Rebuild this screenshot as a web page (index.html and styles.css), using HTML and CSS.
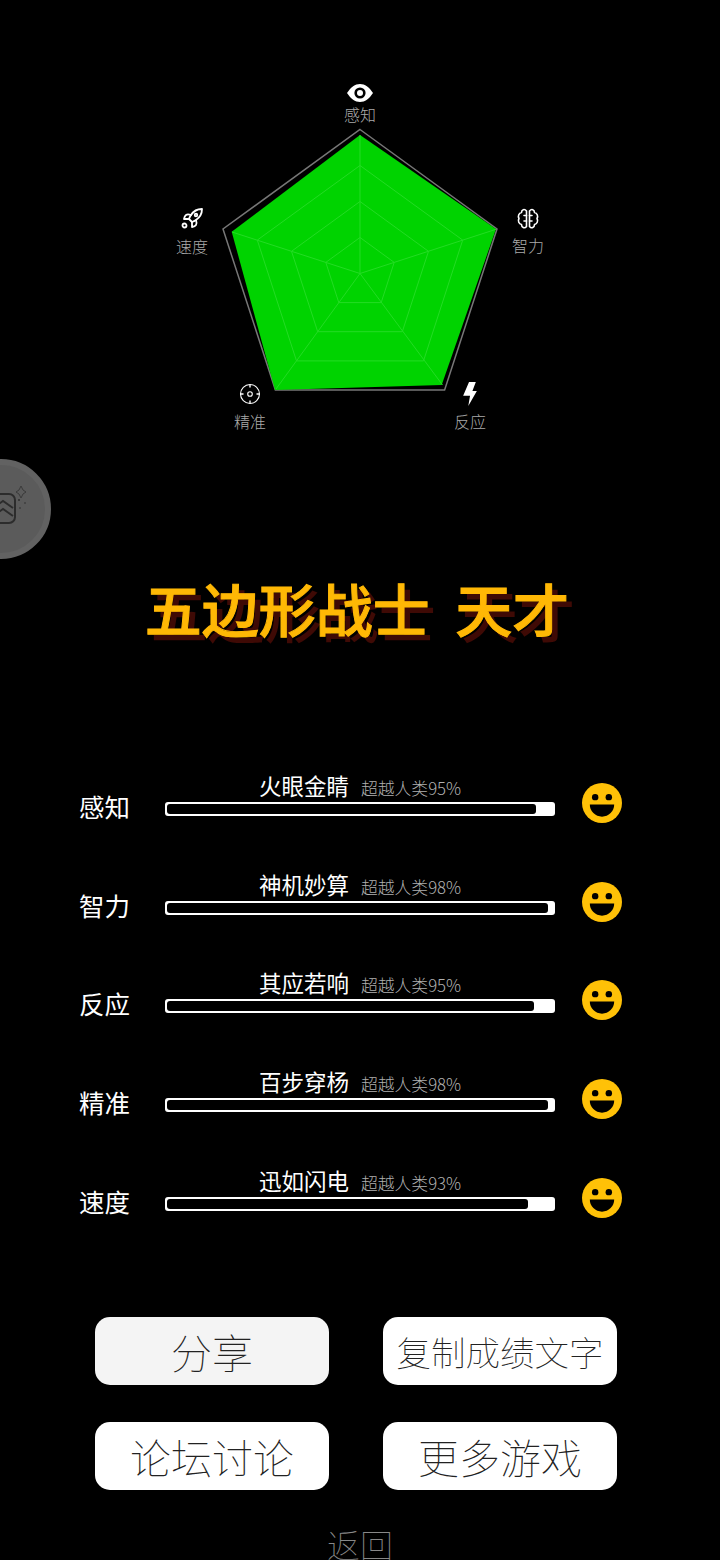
FILE: index.html
```html
<!DOCTYPE html>
<html lang="zh-CN">
<head>
  <meta charset="UTF-8" />
  <meta name="viewport" content="width=device-width, initial-scale=1.0"/>
  <title>五边形战士</title>
  <link rel="stylesheet" href="styles.css">
</head>
<body>

  <svg class="defs" width="0" height="0">
    <symbol id="smile" viewBox="0 0 41 41">
      <circle cx="20.5" cy="20.5" r="20.5" fill="#ffc107"/>
      <circle cx="13.5" cy="14.5" r="3.3" fill="#000"/>
      <circle cx="27.5" cy="14.5" r="3.3" fill="#000"/>
      <path d="M8 22H33a12.5 12.5 0 0 1-25 0z" fill="#000"/>
    </symbol>
  </svg>

  <!-- Radar -->
  <section class="radar">
    <svg class="radar-chart" width="720" height="450" viewBox="0 0 720 450">
      <polygon class="rim" points="360,129.5 497,229 444.6,390 275.4,390 223,229"/>
      <polygon class="score" points="360,135 496,229 441.7,385 275,390 231.7,231.7"/>
      <g class="web">
        <polygon points="360,165.5 462.7,240.1 423.5,360.9 296.5,360.9 257.3,240.1"/>
        <polygon points="360,201.5 428.5,251.3 402.3,331.7 317.7,331.7 291.5,251.3"/>
        <polygon points="360,237.5 394.2,262.4 381.2,302.6 338.8,302.6 325.8,262.4"/>
        <path d="M360 273.5V135M360 273.5L496 229.3M360 273.5L442.5 385M360 273.5L276 389M360 273.5L232 232"/>
      </g>
    </svg>

    <div class="axis axis-top">
      <svg width="26" height="18" viewBox="0 0 26 18">
        <path d="M0 9C4 3 8 0 13 0s9 3 13 9c-4 6-8 9-13 9S4 15 0 9z" fill="#fff"/>
        <circle cx="13" cy="9" r="5.6" fill="#000"/>
        <circle cx="13" cy="9" r="3" fill="#fff"/>
      </svg>
      <span>感知</span>
    </div>
    <div class="axis axis-right">
      <svg width="24" height="22" viewBox="0 0 24 22" fill="none" stroke="#fff" stroke-width="1.6" stroke-linejoin="round" stroke-linecap="round">
        <path d="M10.500 3C8.500 .5 5.500 1.500 5.500 4.500 3 5 1.500 8 3 10.500 1.500 13 3 16 5.500 16.500c0 3 3 4.500 5 2z"/>
        <path d="M13.500 3c2-2.500 5-1.500 5 1.500C21 5 22.500 8 21 10.500c1.500 2.500 0 5.500-2.500 6 0 3-3 4.500-5 2z"/>
        <path d="M10.500 7.500H8M10.500 13H8M13.500 7.500H16M13.500 13H16"/>
      </svg>
      <span>智力</span>
    </div>
    <div class="axis axis-br">
      <svg width="14" height="24" viewBox="0 0 13.300 23.300">
        <polygon points="5.700,0 12.300,0 9,8.700 13.300,8.700 5,23.300 6.700,13.300 0,13.300" fill="#fff"/>
      </svg>
      <span>反应</span>
    </div>
    <div class="axis axis-bl">
      <svg width="22" height="22" viewBox="0 0 22 22" fill="none" stroke="#fff" stroke-width="1.100">
        <circle cx="11" cy="11" r="9.500"/>
        <circle cx="11" cy="11" r="2.300"/>
        <path d="M11 1.500V4.500M11 17.500V20.500M1.500 11H4.500M17.500 11H20.500" stroke-width="1.400"/>
      </svg>
      <span>精准</span>
    </div>
    <div class="axis axis-left">
      <svg width="24" height="24" viewBox="0 0 24 24" fill="none" stroke="#fff" stroke-width="1.800" stroke-linejoin="round" stroke-linecap="round">
        <path d="M12 15l-3-3a22 22 0 0 1 2-3.950A12.880 12.880 0 0 1 22 2c0 2.720-.78 7.500-6 11a22.350 22.350 0 0 1-4 2z"/>
        <path d="M9 12H4s.55-3.030 2-4c1.620-1.080 5 0 5 0"/>
        <path d="M12 15v5s3.030-.55 4-2c1.080-1.620 0-5 0-5"/>
        <circle cx="16" cy="8" r="1.300"/>
        <circle cx="4.500" cy="18.500" r="2"/>
      </svg>
      <span>速度</span>
    </div>
  </section>

  <!-- Floating assistant -->
  <div class="float-ball">
    <svg width="52" height="60" viewBox="0 0 52 60" fill="none" stroke="#2c2c2c">
      <rect x="-14" y="15" width="30" height="29" rx="6" stroke-width="2"/>
      <path d="M-6 29L4 22L14 29M-6 37L4 30L14 37" stroke-width="2"/>
      <path d="M22 7l2 4 3 2-3 2-2 4-2-4-3-2 3-2z" stroke="#3a3a3a" stroke-width="1"/>
      <circle cx="20" cy="21" r="1" fill="#2c2c2c" stroke="none"/>
      <circle cx="26" cy="24" r=".8" fill="#2c2c2c" stroke="none"/>
      <circle cx="21" cy="29" r=".8" fill="#2c2c2c" stroke="none"/>
    </svg>
  </div>

  <h1 class="verdict">五边形战士&nbsp;&nbsp;天才</h1>

  <!-- Stats -->
  <main class="stats">
    <div class="stat">
      <div class="stat-name">感知</div>
      <div class="stat-body">
        <div class="caption"><span class="idiom">火眼金睛</span><span class="rank">超越人类95%</span></div>
        <div class="bar"><div class="fill fill-95"></div></div>
      </div>
      <svg class="face"><use href="#smile"/></svg>
    </div>
    <div class="stat">
      <div class="stat-name">智力</div>
      <div class="stat-body">
        <div class="caption"><span class="idiom">神机妙算</span><span class="rank">超越人类98%</span></div>
        <div class="bar"><div class="fill fill-98"></div></div>
      </div>
      <svg class="face"><use href="#smile"/></svg>
    </div>
    <div class="stat">
      <div class="stat-name">反应</div>
      <div class="stat-body">
        <div class="caption"><span class="idiom">其应若响</span><span class="rank">超越人类95%</span></div>
        <div class="bar"><div class="fill fill-94"></div></div>
      </div>
      <svg class="face"><use href="#smile"/></svg>
    </div>
    <div class="stat">
      <div class="stat-name">精准</div>
      <div class="stat-body">
        <div class="caption"><span class="idiom">百步穿杨</span><span class="rank">超越人类98%</span></div>
        <div class="bar"><div class="fill fill-98"></div></div>
      </div>
      <svg class="face"><use href="#smile"/></svg>
    </div>
    <div class="stat">
      <div class="stat-name">速度</div>
      <div class="stat-body">
        <div class="caption"><span class="idiom">迅如闪电</span><span class="rank">超越人类93%</span></div>
        <div class="bar"><div class="fill fill-93"></div></div>
      </div>
      <svg class="face"><use href="#smile"/></svg>
    </div>
  </main>

  <!-- Buttons -->
  <div class="actions">
    <button class="btn btn-pressed">分享</button>
    <button class="btn btn-long">复制成绩文字</button>
    <button class="btn">论坛讨论</button>
    <button class="btn">更多游戏</button>
  </div>

  <div class="back">返回</div>

</body>
</html>
```

FILE: styles.css
```css
* { box-sizing: border-box; margin: 0; padding: 0; }

body {
  width: 720px;
  height: 1560px;
  overflow: hidden;
  position: relative;
  background: #000;
  color: #fff;
  font-family: "Noto Sans CJK SC", "Noto Sans", sans-serif;
}

.defs { position: absolute; }

/* radar */
.radar {
  position: relative;
  height: 450px;
}

.radar-chart { display: block; }

.rim {
  fill: none;
  stroke: #777;
  stroke-width: 1.5;
}

.score { fill: #00d300; }

.web polygon,
.web path {
  fill: none;
  stroke: #24dc24;
  stroke-width: 1;
}

.axis {
  position: absolute;
  width: 80px;
  display: flex;
  flex-direction: column;
  align-items: center;
  font-size: 16px;
  line-height: 22px;
  font-weight: 300;
  color: #aaa;
}

.axis svg { display: block; }

.axis-top { left: 320px; top: 84px; }
.axis-top span { margin-top: 1px; }
.axis-right { left: 488px; top: 208px; }
.axis-right span { margin-top: 4px; }
.axis-br { left: 430px; top: 382px; }
.axis-br span { margin-top: 4px; }
.axis-bl { left: 210px; top: 383px; }
.axis-bl span { margin-top: 5px; }
.axis-left { left: 152px; top: 207px; }
.axis-left span { margin-top: 4px; }

/* floating ball */
.float-ball {
  position: absolute;
  left: -49px;
  top: 459px;
  width: 100px;
  height: 100px;
  border-radius: 50%;
  background: #5b5b5b;
  border: 6px solid #626262;
  display: flex;
  justify-content: flex-end;
  align-items: center;
}

.float-ball svg {
  margin-right: -6px;
  overflow: visible;
}

/* title */
.verdict {
  margin-top: 111px;
  height: 97px;
  padding-right: 6px;
  font-size: 57px;
  line-height: 92px;
  font-weight: 500;
  -webkit-text-stroke: 1px #ffb805;
  text-align: center;
  color: #ffb805;
  text-shadow: 6px 6px 0 #3f0a05;
  white-space: nowrap;
}

/* stat rows */
.stats {
  margin-top: 112px;
  padding-left: 79px;
  display: flex;
  flex-direction: column;
  gap: 38.7px;
}

.stat {
  height: 60px;
  display: flex;
  align-items: flex-start;
}

.stat-name {
  width: 86px;
  font-size: 25.5px;
  line-height: 36px;
  margin-top: 18px;
}

.stat-body { width: 390px; }

.caption {
  height: 32px;
  padding-left: 94px;
  display: flex;
  white-space: nowrap;
}

.idiom {
  font-size: 22.5px;
  line-height: 30px;
  width: 102px;
}

.rank {
  font-size: 16.8px;
  line-height: 36px;
  color: #b0b0b0;
  font-weight: 300;
}

.bar {
  height: 14px;
  padding: 2px;
  background: #fff;
  border-radius: 3px;
}

.fill {
  height: 10px;
  background: #000;
  border-radius: 3px;
}

.fill-93 { width: 93.500%; }
.fill-94 { width: 95%; }
.fill-95 { width: 95.500%; }
.fill-98 { width: 98.700%; }

.face {
  width: 40px;
  height: 40px;
  margin-left: 27px;
  margin-top: 13px;
}

/* buttons */
.actions {
  margin-top: 92px;
  padding: 0 103px 0 95px;
  display: grid;
  grid-template-columns: 234px 234px;
  column-gap: 54px;
  row-gap: 37px;
}

.btn {
  height: 68px;
  border: none;
  border-radius: 15px;
  background: #fff;
  color: #222;
  font-family: inherit;
  font-size: 41px;
  font-weight: 100;
  white-space: nowrap;
}

.btn-pressed { background: #f4f4f4; }
.btn-long { font-size: 34.500px; }

.back {
  margin-top: 39px;
  text-align: center;
  font-size: 33px;
  line-height: 30px;
  font-weight: 100;
  color: #888;
}
```
